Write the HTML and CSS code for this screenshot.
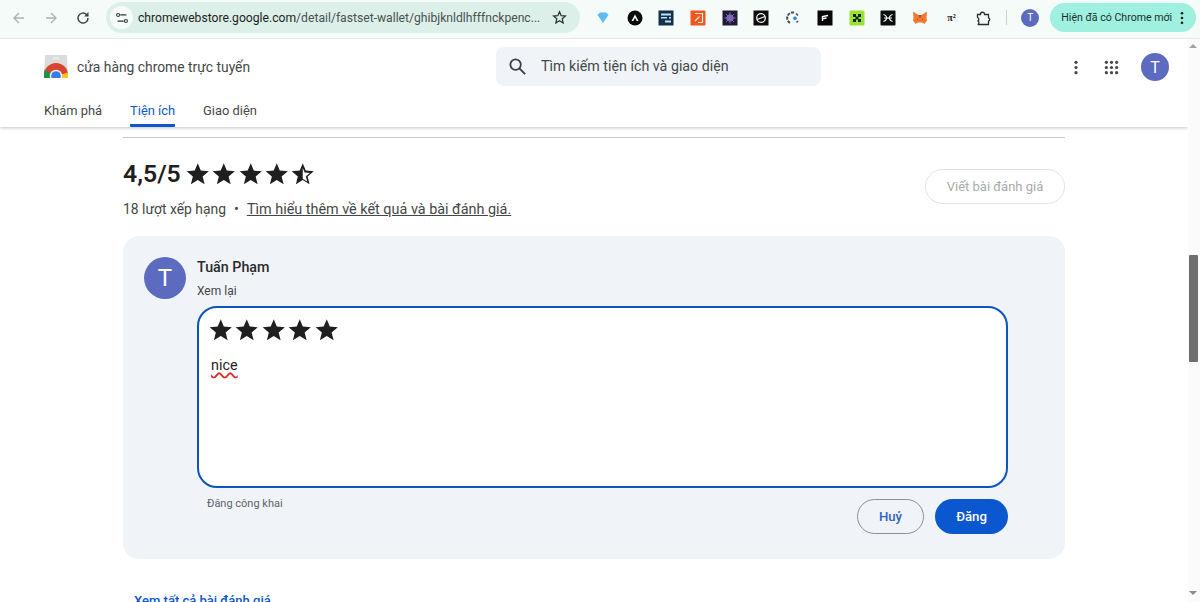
FILE: index.html
```html
<!DOCTYPE html>
<html lang="vi">
<head>
<meta charset="utf-8">
<title>Chrome Web Store</title>
<link rel="stylesheet" href="styles.css">
</head>
<body>
<svg class="defs" width="0" height="0" aria-hidden="true">
  <symbol id="star" viewBox="0 0 24 24"><path d="M12 1.200l3.100 7.600 8.200.6-6.300 5.300 2 8-7-4.300-7 4.300 2-8L.7 9.400l8.200-.6z"/></symbol>
  <symbol id="halfstar" viewBox="0 0 24 24"><path d="M12 1.200l3.100 7.600 8.200.6-6.300 5.300 2 8-7-4.300-7 4.300 2-8L.7 9.400l8.200-.6zM12 6.100v10.900l4.500 2.800-1.300-5.200 4.100-3.400-5.300-.4z" fill-rule="evenodd"/></symbol>
  <clipPath id="logo-clip"><rect x="0" y="0" width="24" height="23"/></clipPath>
</svg>

<header class="toolbar">
  <div class="nav">
    <svg class="nav-icon" viewBox="0 0 16 16"><path d="M13 8H3.500M8 3L3 8l5 5" fill="none" stroke="#a9b3b0" stroke-width="1.400"/></svg>
    <svg class="nav-icon" viewBox="0 0 16 16"><path d="M3 8h9.500M8 3l5 5-5 5" fill="none" stroke="#a9b3b0" stroke-width="1.400"/></svg>
    <svg class="nav-icon" viewBox="0 0 16 16"><path d="M13 8a5 5 0 1 1-1.500-3.500L13 6" fill="none" stroke="#3c4745" stroke-width="1.500"/><path d="M13.500 2v4.500H9z" fill="#3c4745"/></svg>
  </div>
  <div class="omnibox">
    <span class="tune"><svg viewBox="0 0 16 16" width="14" height="14"><path d="M6 4.500h7M3 11.500h7" stroke="#2c3432" stroke-width="1.300" fill="none"/><circle cx="3.500" cy="4.500" r="1.700" fill="none" stroke="#2c3432" stroke-width="1.200"/><circle cx="12.500" cy="11.500" r="1.700" fill="none" stroke="#2c3432" stroke-width="1.200"/></svg></span>
    <span class="url"><span class="host">chromewebstore.google.com</span>/detail/fastset-wallet/ghibjknldlhfffnckpenc...</span>
    <svg class="bookmark" viewBox="0 0 16 16"><path d="M8 1.800l1.800 4.200 4.500.4-3.400 3 1 4.400L8 11.500l-3.900 2.300 1-4.400-3.400-3 4.500-.4z" fill="none" stroke="#27302e" stroke-width="1.300"/></svg>
  </div>
  <div class="exts">
    <svg class="ext" viewBox="0 0 16 16"><path d="M2.500 5L5 2.500h6L13.500 5 8 13z" fill="#5dbcf2"/></svg>
    <svg class="ext" viewBox="0 0 16 16"><circle cx="8" cy="8" r="7.500" fill="#0b0b0b"/><path d="M4.500 11L8 4.500 11.500 11H9.800L8 7.800 6.300 11z" fill="#fff"/></svg>
    <svg class="ext" viewBox="0 0 16 16"><rect width="15" height="15" x=".5" y=".5" fill="#12304a"/><path d="M3 3.500h10v2H3zM3 7h6v1.500H3zM7 10.500h6v2H7zM11 7h2v1.500h-2z" fill="#bfe3ee"/></svg>
    <svg class="ext" viewBox="0 0 16 16"><rect width="15" height="15" x=".5" y=".5" rx="1" fill="#f2551d"/><path d="M5 3.500h7.500v9H8M9.500 6.500L5 11" fill="none" stroke="#ffe9dd" stroke-width="1.200"/></svg>
    <svg class="ext" viewBox="0 0 16 16"><rect width="15" height="15" x=".5" y=".5" fill="#211c33"/><circle cx="8" cy="8" r="3.600" fill="#7d68b8"/><path d="M8 2.500v11M2.500 8h11M4 4l8 8M12 4l-8 8" stroke="#7d68b8"/></svg>
    <svg class="ext" viewBox="0 0 16 16"><rect width="15" height="15" x=".5" y=".5" fill="#0c0c0c"/><circle cx="8" cy="8" r="4.300" fill="none" stroke="#f2f2f2" stroke-width="1.300"/><path d="M4 9.500l8-3" stroke="#f2f2f2" stroke-width="1.300"/></svg>
    <svg class="ext" viewBox="0 0 16 16"><path d="M9 2.500A5.700 5.700 0 0 0 5 13" fill="none" stroke="#3f4a52" stroke-width="2" stroke-dasharray="3 1.200"/><path d="M11 3.500l2 2M11.500 12.500l1.500-1.500" stroke="#3f4a52" stroke-width="1.500"/><circle cx="10" cy="8.200" r="1.800" fill="#2f7fe8"/></svg>
    <svg class="ext" viewBox="0 0 16 16"><rect width="15" height="15" x=".5" y=".5" fill="#060606"/><path d="M5.500 11V6.500L11 5.500M5.500 8.800L9.500 8" fill="none" stroke="#fff" stroke-width="1.400"/></svg>
    <svg class="ext" viewBox="0 0 16 16"><rect width="15" height="15" x=".5" y=".5" rx="1.500" fill="#97e32f"/><path d="M4 4h3v3H4zM9 4h3v3H9zM4 9h3v3H4zM9 9h3v3H9zM6.500 6.500h3v3h-3z" fill="#14240a"/></svg>
    <svg class="ext" viewBox="0 0 16 16"><rect width="15" height="15" x=".5" y=".5" rx="1" fill="#0c0f10"/><path d="M3.500 4.500C6 5 6.500 7 7 8c-.5 1-1 3-3.500 3.500M12.500 4.500C10 5 9.500 7 9 8c.5 1 1 3 3.500 3.500M4 8h8" fill="none" stroke="#e8f4f2" stroke-width="1.200"/></svg>
    <svg class="ext" viewBox="0 0 16 16"><path d="M1 1.500L6.500 5h3L15 1.500 14.500 8l.5 2.500-2.500 3.500-2.500-1.500H6L3.500 14 1 10.500 1.500 8z" fill="#ee7a34"/><path d="M5 8.500l1.500 1L5 10.500zM11 8.500l-1.500 1 1.500 1zM6.500 5L8 9l1.500-4z" fill="#b8471f"/></svg>
    <span class="ext pi">π²</span>
    <svg class="ext" viewBox="0 0 16 16"><path d="M2.500 4.500h3a2 2 0 0 1 4-.5v.5h4v3.300a1.800 1.800 0 0 1 0 3.400v3.300H2.800a2 2 0 0 0 .2-3.500 2 2 0 0 0-.5-3.500z" fill="none" stroke="#27302e" stroke-width="1.300"/></svg>
  </div>
  <span class="separator"></span>
  <span class="profile">T</span>
  <div class="update"><span>Hiện đã có Chrome mới</span><svg class="kebab-small" viewBox="0 0 4 16"><circle cx="2" cy="2.500" r="1.500"/><circle cx="2" cy="8" r="1.500"/><circle cx="2" cy="13.500" r="1.500"/></svg></div>
</header>

<div class="viewport">
  <div class="page">
    <nav class="store-header">
      <div class="brand-row">
        <div class="brand">
          <svg class="logo" viewBox="0 0 24 24">
            <path d="M1 0h22l1 23H0z" fill="#dcdcdc"/>
            <path d="M9 3h6" stroke="#f5f5f5" stroke-width="1.200"/>
            <g clip-path="url(#logo-clip)">
              <circle cx="12" cy="20" r="12" fill="#d9432f"/>
              <path d="M12 21L.5 14.500 0 24h12z" fill="#1f9147"/>
              <path d="M12 21l12-3.500V24H12z" fill="#f5c51d"/>
              <circle cx="12" cy="21" r="6.200" fill="#f4f4f4"/>
              <circle cx="12" cy="21" r="4.800" fill="#3b79e6"/>
            </g>
          </svg>
          <span class="brand-name">cửa hàng chrome trực tuyến</span>
        </div>
        <div class="search">
          <svg class="search-icon" viewBox="0 0 20 20"><circle cx="8" cy="8" r="5.500" fill="none" stroke="#3c4043" stroke-width="1.900"/><path d="M12 12l6 6" stroke="#3c4043" stroke-width="2.100"/></svg>
          <span>Tìm kiếm tiện ích và giao diện</span>
        </div>
        <div class="account">
          <svg class="kebab" viewBox="0 0 4 16"><circle cx="2" cy="2.500" r="1.700"/><circle cx="2" cy="8" r="1.700"/><circle cx="2" cy="13.500" r="1.700"/></svg>
          <svg class="apps" viewBox="0 0 16 16"><g><circle cx="2.500" cy="2.500" r="1.700"/><circle cx="8" cy="2.500" r="1.700"/><circle cx="13.500" cy="2.500" r="1.700"/><circle cx="2.500" cy="8" r="1.700"/><circle cx="8" cy="8" r="1.700"/><circle cx="13.500" cy="8" r="1.700"/><circle cx="2.500" cy="13.500" r="1.700"/><circle cx="8" cy="13.500" r="1.700"/><circle cx="13.500" cy="13.500" r="1.700"/></g></svg>
          <span class="avatar avatar-header">T</span>
        </div>
      </div>
      <div class="tabs">
        <a class="tab">Khám phá</a>
        <a class="tab tab-active">Tiện ích</a>
        <a class="tab">Giao diện</a>
      </div>
    </nav>

    <main class="content">
      <hr class="rule">
      <section class="summary">
        <div>
          <div class="score-row">
            <span class="score">4,5/5</span>
            <span class="stars">
              <svg class="star"><use href="#star"/></svg>
              <svg class="star"><use href="#star"/></svg>
              <svg class="star"><use href="#star"/></svg>
              <svg class="star"><use href="#star"/></svg>
              <svg class="star"><use href="#halfstar"/></svg>
            </span>
          </div>
          <p class="meta"><span class="count">18 lượt xếp hạng</span><span class="bullet">•</span><a class="learn">Tìm hiểu thêm về kết quả và bài đánh giá.</a></p>
        </div>
        <button class="write">Viết bài đánh giá</button>
      </section>

      <section class="card">
        <span class="avatar avatar-review">T</span>
        <div class="card-body">
          <div class="name">Tuấn Phạm</div>
          <div class="review-label">Xem lại</div>
          <div class="editor">
            <span class="stars">
              <svg class="star"><use href="#star"/></svg>
              <svg class="star"><use href="#star"/></svg>
              <svg class="star"><use href="#star"/></svg>
              <svg class="star"><use href="#star"/></svg>
              <svg class="star"><use href="#star"/></svg>
            </span>
            <p class="review-text"><span class="misspelt">nice</span></p>
          </div>
          <div class="form-foot">
            <span class="public">Đăng công khai</span>
            <div class="actions">
              <button class="btn btn-cancel">Huỷ</button>
              <button class="btn btn-post">Đăng</button>
            </div>
          </div>
        </div>
      </section>
      <a class="all-reviews">Xem tất cả bài đánh giá</a>
    </main>
  </div>

  <div class="scrollbar">
    <span class="arrow-up"></span>
    <span class="thumb"></span>
    <span class="arrow-down"></span>
  </div>
</div>
</body>
</html>
```

FILE: styles.css
```css
* { box-sizing: border-box; }
html, body { margin: 0; padding: 0; }
body {
  width: 1200px;
  height: 602px;
  overflow: hidden;
  background: #fff;
  color: #1f1f1f;
  font-family: Roboto, "Noto Sans", sans-serif;
}
.defs { display: block; height: 0; }

/* Browser toolbar */
.toolbar {
  height: 39px;
  display: flex;
  align-items: center;
  background: #f5fbf9;
  border-bottom: 1px solid #e6eaea;
  padding: 0 5px 3px 11px;
}
.nav { display: flex; gap: 16px; width: 95px; flex: none; }
.nav-icon { width: 16px; height: 16px; }
.omnibox {
  width: 474px;
  height: 31px;
  flex: none;
  border-radius: 16px;
  background: #dcefe9;
  display: flex;
  align-items: center;
  padding: 0 13.500px 0 4px;
}
.tune {
  width: 23px;
  height: 23px;
  border-radius: 50%;
  background: #f5fbf9;
  display: flex;
  align-items: center;
  justify-content: center;
  flex: none;
}
.url {
  margin-left: 5px;
  font-size: 12.150px;
  color: #47524f;
  flex: 1;
  white-space: nowrap;
}
.host { color: #1c2422; }
.bookmark { width: 15px; height: 15px; flex: none; }
.exts {
  display: flex;
  align-items: center;
  gap: 15.700px;
  margin-left: 15px;
  flex: none;
}
.ext { width: 16px; height: 16px; flex: none; display: block; }
.pi {
  font-family: "Liberation Serif", serif;
  font-size: 10px;
  font-weight: 700;
  line-height: 16px;
  text-align: center;
  color: #222;
}
.separator {
  width: 1px;
  height: 15px;
  margin-left: 15px;
  background: #bcd8d3;
  flex: none;
}
.profile {
  width: 18px;
  height: 18px;
  border-radius: 50%;
  background: #5c6bc0;
  color: #fff;
  font-size: 10px;
  line-height: 18px;
  text-align: center;
  margin-left: 14px;
  flex: none;
}
.update {
  width: 146px;
  height: 29px;
  margin-left: 11px;
  border-radius: 15px;
  background: #a0f0e0;
  display: flex;
  align-items: center;
  justify-content: space-between;
  padding: 0 12px 0 11px;
  font-size: 10.600px;
  color: #16302b;
  white-space: nowrap;
  flex: none;
}
.kebab-small { width: 4px; height: 14px; fill: #1c2422; flex: none; }

/* Viewport */
.viewport { display: flex; height: 563px; }
.page { width: 1188px; flex: none; overflow: hidden; }

.store-header {
  height: 88px;
  background: #fff;
  box-shadow: 0 1px 3px rgba(60, 64, 67, .3);
  padding: 0 19px 0 44px;
  position: relative;
}
.brand-row { display: flex; align-items: center; height: 56px; }
.brand { display: flex; align-items: center; gap: 9px; width: 452px; flex: none; }
.logo { width: 24px; height: 24px; flex: none; }
.brand-name { font-size: 13.850px; color: #444746; white-space: nowrap; }
.search {
  width: 325px;
  height: 39px;
  border-radius: 8px;
  background: #f0f4f9;
  display: flex;
  align-items: center;
  gap: 14px;
  padding-left: 12px;
  font-size: 14.250px;
  color: #444746;
  flex: none;
  margin-top: -2px;
}
.search-icon { width: 19px; height: 19px; flex: none; }
.account {
  display: flex;
  align-items: center;
  margin-left: auto;
}
.kebab { width: 4px; height: 15px; fill: #444746; }
.apps { width: 15px; height: 15px; fill: #444746; margin-left: 26px; }
.avatar {
  border-radius: 50%;
  background: #5c6bc0;
  color: #fff;
  display: flex;
  align-items: center;
  justify-content: center;
  flex: none;
}
.avatar-header { width: 28px; height: 28px; font-size: 16px; margin-left: 22px; }
.tabs { display: flex; gap: 28px; height: 32px; }
.tab {
  font-size: 12.900px;
  color: #444746;
  height: 32px;
  padding-top: 8px;
  line-height: 16px;
}
.tab-active { color: #0b57d0; border-bottom: 3px solid #0b57d0; border-radius: 0 0 1px 1px; }

/* Content */
.content { padding: 0 123px; height: 475px; overflow: hidden; }
.rule { margin: 10px 0 0; border: 0; border-top: 1px solid #c7c9cc; }
.summary { display: flex; justify-content: space-between; align-items: flex-end; margin-top: 19px; }
.score-row { display: flex; align-items: center; gap: 5px; height: 32px; margin-top: 1px; }
.score { font-size: 24.800px; font-weight: 600; color: #1f1f1f; line-height: 32px; }
.stars { display: flex; gap: 2.900px; }
.star { width: 23.500px; height: 23.500px; fill: #1f1f1f; flex: none; }
.meta { margin: 9px 0 0; font-size: 14.400px; line-height: 20px; color: #444746; white-space: nowrap; }
.count { font-size: 13.900px; }
.bullet { margin: 0 8px; }
.learn { text-decoration: underline; color: #444746; }
.write {
  width: 140px;
  height: 35px;
  border: 1px solid #e3e3e3;
  border-radius: 18px;
  background: #fff;
  color: #a9abad;
  font: 400 13px Roboto, sans-serif;
  margin-bottom: 16px;
}

.card {
  margin-top: 16px;
  height: 323px;
  border-radius: 16px;
  background: #f0f4f9;
  padding: 21px 57px 0 21px;
  display: flex;
  gap: 11px;
}
.avatar-review { width: 42px; height: 42px; font-size: 24px; }
.card-body { flex: 1; min-width: 0; }
.name { font-size: 14.300px; font-weight: 500; line-height: 20px; color: #2a2a2a; }
.review-label { font-size: 12px; line-height: 16px; color: #444746; margin-top: 6px; }
.editor {
  height: 182px;
  margin-top: 7px;
  background: #fff;
  border: 2px solid #0c55bd;
  border-radius: 20px;
  padding: 10px 10px;
}
.review-text { margin: 14px 0 0 2px; font-size: 14.400px; line-height: 20px; color: #1f1f1f; }
.misspelt { text-decoration: underline wavy #d93025 1.500px; text-underline-offset: 2px; }
.form-foot { display: flex; justify-content: space-between; align-items: flex-start; }
.public { font-size: 11px; line-height: 16px; color: #5f6368; margin: 8px 0 0 10px; }
.actions { display: flex; gap: 11px; margin-top: 11px; }
.btn {
  height: 35px;
  border-radius: 18px;
  font: 500 13.200px Roboto, sans-serif;
  padding: 0;
}
.btn-cancel { width: 67px; background: transparent; border: 1px solid #8e918f; color: #2d62c4; }
.btn-post { width: 73px; background: #0b57d0; border: 0; color: #fff; }
.all-reviews {
  display: block;
  margin: 32px 0 0 11px;
  font-size: 13px;
  line-height: 20px;
  font-weight: 500;
  color: #0b57d0;
}

/* Scrollbar */
.scrollbar {
  width: 12px;
  flex: none;
  background: #fbfbfb;
  padding: 5px 2px 0 0;
  display: flex;
  flex-direction: column;
  align-items: center;
}
.arrow-up, .arrow-down { width: 0; height: 0; border-left: 4px solid transparent; border-right: 4px solid transparent; flex: none; }
.arrow-up { border-bottom: 4px solid #a3a3a3; }
.arrow-down { border-top: 4px solid #8a8a8a; margin-top: 229px; }
.thumb { width: 9px; height: 107px; margin-top: 207px; border-radius: 1px; background: #6e6e6e; flex: none; }
```
